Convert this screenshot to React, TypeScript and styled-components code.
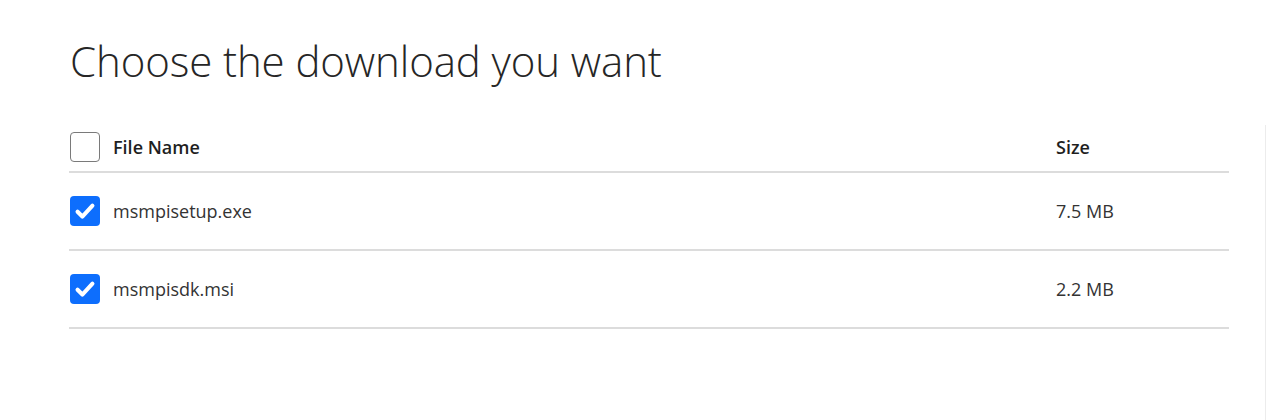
import React from "react";
import styled, { createGlobalStyle } from "styled-components";

const Global = createGlobalStyle`
  html, body { margin: 0; padding: 0; background: #fff; }
  body { font-family: "Open Sans", "Noto Sans", sans-serif; color: #262626; }
`;

const Page = styled.div`
  display: flex;
  width: 1266px;
  height: 420px;
  overflow: hidden;
`;

const Main = styled.main`
  flex: 1;
  padding: 30px 36px 0 69px;
`;

const SideEdge = styled.div`
  width: 1px;
  margin-top: 125px;
  background: #ececec;
`;

const Title = styled.h1`
  margin: 0 0 0 1px;
  font-family: "Open Sans", sans-serif;
  font-weight: 300;
  font-size: 42px;
  line-height: 62px;
  color: #262626;
  letter-spacing: -0.1px;
`;

const Table = styled.div`
  margin-top: 31px;
  width: 1160px;
`;

const Row = styled.div<{ $header?: boolean }>`
  display: grid;
  grid-template-columns: 1fr 173px;
  align-items: center;
  height: ${(p) => (p.$header ? "48px" : "76px")};
  border-bottom: 2px solid #dcdcdc;
  font-size: 18px;
  font-weight: ${(p) => (p.$header ? 600 : 400)};
  color: ${(p) => (p.$header ? "#1f1f1f" : "#333")};
`;

const NameCell = styled.div`
  display: flex;
  align-items: center;
  gap: 13px;
  padding-left: 1px;
`;

const Box = styled.span<{ $checked?: boolean }>`
  box-sizing: border-box;
  width: 30px;
  height: 30px;
  border-radius: 4px;
  display: inline-flex;
  align-items: center;
  justify-content: center;
  background: ${(p) => (p.$checked ? "#0d6efd" : "#fff")};
  border: ${(p) => (p.$checked ? "none" : "1.5px solid #7a7a7a")};
`;

const SizeCell = styled.div``;

function Check({ checked }: { checked?: boolean }) {
  return (
    <Box $checked={checked}>
      {checked && (
        <svg width="24" height="24" viewBox="0 0 20 20">
          <path
            d="M3.8 10.6l4 4 8.4-9"
            fill="none"
            stroke="#fff"
            strokeWidth="3.4"
            strokeLinecap="round"
            strokeLinejoin="round"
          />
        </svg>
      )}
    </Box>
  );
}

const files = [
  { name: "msmpisetup.exe", size: "7.5 MB" },
  { name: "msmpisdk.msi", size: "2.2 MB" },
];

export default function App() {
  return (
    <Page>
      <Global />
      <Main>
        <Title>Choose the download you want</Title>
        <Table>
          <Row $header>
            <NameCell>
              <Check />
              File Name
            </NameCell>
            <SizeCell>Size</SizeCell>
          </Row>
          {files.map((f) => (
            <Row key={f.name}>
              <NameCell>
                <Check checked />
                {f.name}
              </NameCell>
              <SizeCell>{f.size}</SizeCell>
            </Row>
          ))}
        </Table>
      </Main>
      <SideEdge />
    </Page>
  );
}
